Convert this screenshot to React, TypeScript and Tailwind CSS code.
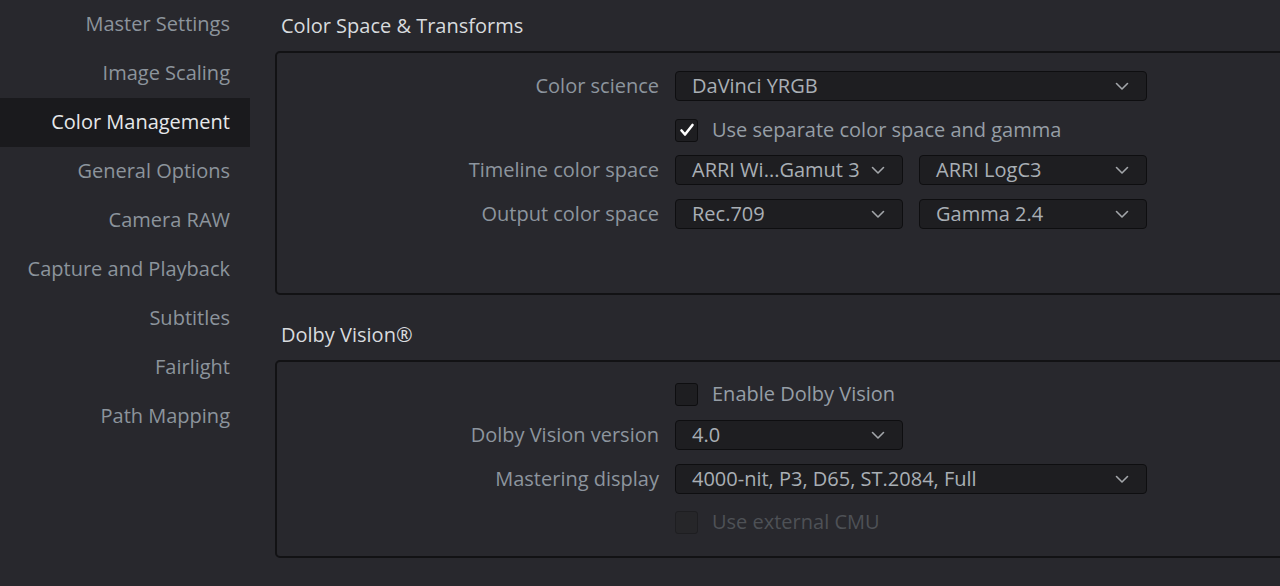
import React from "react";

const font = { fontFamily: '"Open Sans", "Noto Sans", sans-serif' };

function Chevron() {
  return (
    <svg width="14" height="9" viewBox="0 0 14 9" fill="none" className="shrink-0">
      <path d="M1.5 1.5 L7 7 L12.5 1.5" stroke="#a3a6aa" strokeWidth="1.6" strokeLinecap="round" strokeLinejoin="round" />
    </svg>
  );
}

function Select({ value, w }: { value: string; w: string }) {
  return (
    <div
      className={`${w} h-[30px] flex items-center justify-between pl-[16px] pr-[17px] rounded-[4px] bg-[#1e1e21] border border-[#0e0e10] text-[#a9afb5]`}
    >
      <span className="leading-none whitespace-nowrap">{value}</span>
      <Chevron />
    </div>
  );
}

function Check({ checked, disabled, label }: { checked?: boolean; disabled?: boolean; label: string }) {
  return (
    <div className="flex items-center h-[30px]">
      <div
        className={`w-[23px] h-[23px] rounded-[3px] flex items-center justify-center border ${
          disabled ? "bg-[#262629] border-[#1e1e21]" : "bg-[#1e1e21] border-[#0e0e10]"
        }`}
      >
        {checked && (
          <svg width="16" height="14" viewBox="0 0 16 14">
            <path d="M2.5 7.5 L6 11.5 L13.5 2" stroke="#ffffff" strokeWidth="2.6" fill="none" strokeLinecap="round" strokeLinejoin="round" />
          </svg>
        )}
      </div>
      <span className={`ml-[14px] leading-none ${disabled ? "text-[#4e5156]" : "text-[#969ea6]"}`}>{label}</span>
    </div>
  );
}

function Row({ label, children, className = "" }: { label?: string; children: React.ReactNode; className?: string }) {
  return (
    <div className={`flex items-center ${className}`}>
      <div className="w-[398px] pr-[16px] text-right text-[#8d959e] leading-none whitespace-nowrap">{label ?? ""}</div>
      <div className="flex items-center gap-[16px]">{children}</div>
    </div>
  );
}

export default function App() {
  const nav = [
    "Master Settings",
    "Image Scaling",
    "Color Management",
    "General Options",
    "Camera RAW",
    "Capture and Playback",
    "Subtitles",
    "Fairlight",
    "Path Mapping",
  ];
  return (
    <div className="w-[1280px] h-[586px] overflow-hidden bg-[#28282d] flex text-[20px]" style={font}>
      <div className="w-[250px] shrink-0 flex flex-col">
        {nav.map((n) => (
          <div
            key={n}
            className={`h-[49px] flex items-center justify-end pr-[20px] ${
              n === "Color Management" ? "bg-[#1a1a1d] text-[#e6e8ea]" : "text-[#8c949c]"
            }`}
          >
            <span className="leading-none -mt-[2px]">{n}</span>
          </div>
        ))}
      </div>
      <div className="ml-[25px] w-[1040px] shrink-0 flex flex-col">
        <div className="h-[51px] flex items-center pl-[6px] text-[#d8dbde]">
          <span className="leading-none">Color Space &amp; Transforms</span>
        </div>
        <div className="h-[244px] rounded-[5px] border-2 border-[#121214] pt-[18px] flex flex-col">
          <Row label="Color science" className="h-[30px]">
            <Select value="DaVinci YRGB" w="w-[472px]" />
          </Row>
          <Row className="mt-[14px] h-[30px]">
            <Check checked label="Use separate color space and gamma" />
          </Row>
          <Row label="Timeline color space" className="mt-[10px] h-[30px]">
            <Select value="ARRI Wi...Gamut 3" w="w-[228px]" />
            <Select value="ARRI LogC3" w="w-[228px]" />
          </Row>
          <Row label="Output color space" className="mt-[14px] h-[30px]">
            <Select value="Rec.709" w="w-[228px]" />
            <Select value="Gamma 2.4" w="w-[228px]" />
          </Row>
        </div>
        <div className="h-[65px] flex items-end pb-[15px] pl-[6px] text-[#d8dbde]">
          <span className="leading-none">Dolby Vision®</span>
        </div>
        <div className="h-[198px] rounded-[5px] border-2 border-[#121214] pt-[17px] flex flex-col">
          <Row className="h-[30px]">
            <Check label="Enable Dolby Vision" />
          </Row>
          <Row label="Dolby Vision version" className="mt-[11px] h-[30px]">
            <Select value="4.0" w="w-[228px]" />
          </Row>
          <Row label="Mastering display" className="mt-[14px] h-[30px]">
            <Select value="4000-nit, P3, D65, ST.2084, Full" w="w-[472px]" />
          </Row>
          <Row className="mt-[13px] h-[30px]">
            <Check disabled label="Use external CMU" />
          </Row>
        </div>
      </div>
    </div>
  );
}
